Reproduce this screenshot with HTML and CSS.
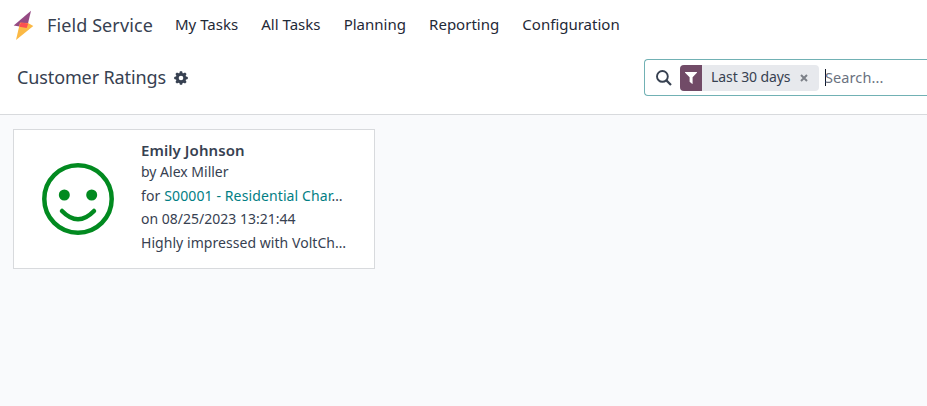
FILE: index.html
```html
<!DOCTYPE html>
<html lang="en">
<head>
<meta charset="utf-8">
<title>Customer Ratings</title>
<link rel="stylesheet" href="styles.css">
</head>
<body>
<header class="navbar">
  <svg class="logo" viewBox="0 0 21 30" width="21" height="30">
    <path d="M18 .8 L.7 15.5 L14 17.8 Z" fill="#954a84"/>
    <path d="M7 12.8 L15 13 L20.300 16 L3 30 Z" fill="#fbb945"/>
    <path d="M7.700 12.600 L15.200 13.500 L13.700 18 L6.300 16.700 Z" fill="#fc4f50"/>
  </svg>
  <span class="brand">Field Service</span>
  <nav class="menu">
    <a>My Tasks</a><a>All Tasks</a><a>Planning</a><a>Reporting</a><a>Configuration</a>
  </nav>
</header>
<section class="control-panel">
  <h1 class="title">Customer Ratings</h1>
  <svg class="gear" viewBox="0 0 14 14" width="14" height="14">
    <g fill="#374151"><circle cx="7" cy="7" r="5.2"/>
    <path id="tooth" d="M5.9 0.2h2.2l.6 2.3H5.3zM5.900 13.800h2.200l.6-2.300H5.300z"/>
    <use href="#tooth" transform="rotate(45 7 7)"/><use href="#tooth" transform="rotate(90 7 7)"/><use href="#tooth" transform="rotate(135 7 7)"/></g>
    <circle cx="7" cy="7" r="2.3" fill="#fff"/>
  </svg>
  <div class="search">
    <svg class="lens" viewBox="0 0 16 16" width="16" height="16" fill="none" stroke="#374151"><circle cx="6.4" cy="6.4" r="5.4" stroke-width="1.9"/><path d="M10.4 10.4L15 15" stroke-width="2.2"/></svg>
    <div class="facet">
      <span class="facet-icon"><svg viewBox="0 0 12 12" width="12" height="12"><path d="M.4 0h11.2c.4 0 .6.5.3.8L7.600 5.200v6.400c0 .4-.3.5-.6.2L4.600 9.800V5.200L.1.8C-.2.5 0 0 .4 0z" fill="#fff"/></svg></span>
      <span class="facet-label">Last 30 days</span>
      <svg class="close" viewBox="0 0 8 8" width="8" height="8"><path d="M1 1l6 6M7 1L1 7" stroke="#7c8088" stroke-width="2"/></svg>
    </div>
    <span class="caret"></span><span class="placeholder">Search...</span>
  </div>
</section>
<main class="content">
  <article class="card">
    <svg class="smile" viewBox="0 0 72 72" width="72" height="72" fill="none" stroke="#028a20"><circle cx="36" cy="36" r="33.7" stroke-width="4.5"/><circle cx="22.3" cy="32" r="5.5" fill="#028a20" stroke="none"/><circle cx="49.7" cy="32" r="5.5" fill="#028a20" stroke="none"/><path d="M20 48Q36 64.500 52 48" stroke-width="4.500" stroke-linecap="round"/></svg>
    <div class="details">
      <strong class="name">Emily Johnson</strong>
      <div class="line">by Alex Miller</div>
      <div class="line order">for <a>S00001 - Residential Char</a>…</div>
      <div class="line">on 08/25/2023 13:21:44</div>
      <div class="line comment">Highly impressed with VoltCh…</div>
    </div>
  </article>
</main>
</body>
</html>
```
FILE: styles.css
```css
* { box-sizing: border-box; }
body { margin: 0; height: 406px; overflow: hidden; background: #f9fafc; color: #374151; font: 14px/21px "Noto Sans", sans-serif; }
svg { flex: none; }
.navbar { display: flex; align-items: center; height: 50px; padding-left: 13px; background: #fff; }
.brand { margin-left: 13px; width: 128px; font-size: 18px; letter-spacing: 0.1px; white-space: nowrap; }
.menu { display: flex; gap: 23.2px; padding-bottom: 2px; color: #1f2937; font-size: 15px; }
.control-panel { display: flex; align-items: center; height: 65px; padding: 0 0 9px 17px; background: #fff; border-bottom: 1px solid #d8dadd; }
.title { margin: 0; width: 157px; font-size: 18px; font-weight: 400; letter-spacing: -0.12px; white-space: nowrap; }
.search { display: flex; align-items: center; width: 283px; height: 37px; margin-left: auto; padding-left: 11px; border: 1px solid #71b1b4; border-right: 0; border-radius: 4px 0 0 4px; }
.facet { display: flex; align-items: center; width: 139px; height: 26px; margin-left: 8px; border-radius: 4px; background: #e7e9ed; overflow: hidden; }
.facet-icon { display: flex; align-items: center; justify-content: center; width: 22px; height: 26px; background: #714b67; }
.facet-label { width: 89px; margin-left: 9px; padding-bottom: 2px; letter-spacing: -0.09px; white-space: nowrap; }
.caret { width: 1px; height: 17px; margin-left: 6px; background: #111827; }
.placeholder { margin-left: -1px; color: #6b7280; font-size: 14.5px; letter-spacing: 0.1px; }
.content { padding: 14px 13px; }
.card { display: flex; width: 362px; height: 140px; padding: 10px 28px; background: #fff; border: 1px solid #d8dadd; }
.smile { margin: 23px 27px 0 0; }
.details { width: 205px; flex: none; white-space: nowrap; }
.name { display: block; font-size: 15px; font-weight: 600; letter-spacing: 0.08px; }
.line { height: 23.5px; }
.line a { color: #017e84; }
.order { letter-spacing: 0.12px; }
.comment { letter-spacing: 0.05px; }
```
